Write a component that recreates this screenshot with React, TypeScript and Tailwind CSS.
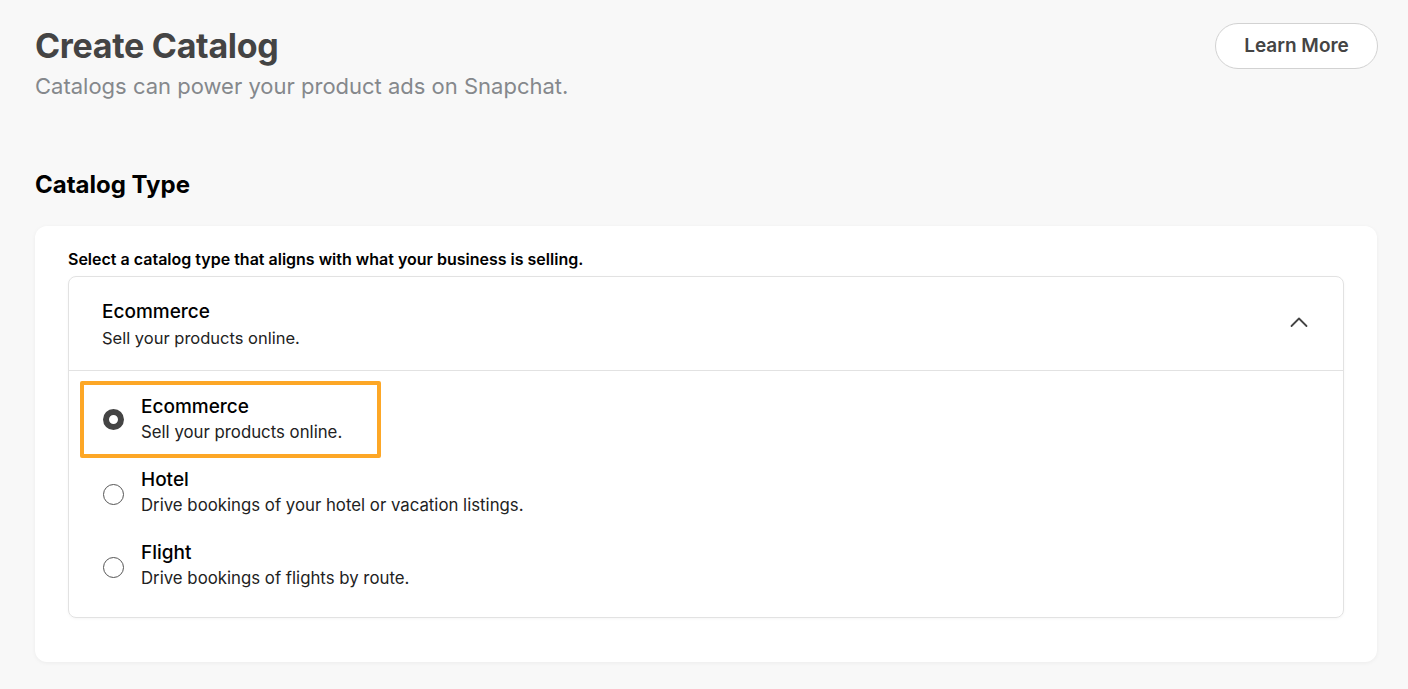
import React from 'react';

const options = [
  { title: 'Ecommerce', desc: 'Sell your products online.', selected: true },
  { title: 'Hotel', desc: 'Drive bookings of your hotel or vacation listings.', selected: false },
  { title: 'Flight', desc: 'Drive bookings of flights by route.', selected: false },
];

const Radio: React.FC<{ checked: boolean }> = ({ checked }) =>
  checked ? (
    <span className="block shrink-0 w-[21px] h-[21px] rounded-full border-[6px] border-[#444444] bg-white" />
  ) : (
    <span className="block shrink-0 w-[21px] h-[21px] rounded-full border border-[#555555] bg-white" />
  );

export default function App() {
  return (
    <div className="min-h-[689px] bg-[#f8f8f8] pl-[35px] pr-[31px] pt-[26px] pb-[27px] font-['Inter','Open_Sans',sans-serif]">
      {/* Header */}
      <div className="flex items-start justify-between">
        <div>
          <h1 className="text-[34px] leading-[40px] font-bold text-[#444444] tracking-[-0.3px]">Create Catalog</h1>
          <p className="mt-[6px] text-[22px] leading-[28px] text-[#85888c]">Catalogs can power your product ads on Snapchat.</p>
        </div>
        <button className="mt-[-3px] mr-[-1px] h-[46px] w-[163px] rounded-full border border-[#d2d2d2] bg-white text-[19px] font-semibold text-[#444444]">
          Learn More
        </button>
      </div>

      <h2 className="mt-[70px] text-[24px] leading-[30px] font-bold text-black">Catalog Type</h2>

      {/* Card */}
      <div className="mt-[26px] rounded-[12px] bg-white shadow-[0_1px_4px_rgba(0,0,0,0.05)] px-[33px] pt-[23px] pb-[44px]">
        <p className="text-[16px] leading-[20px] font-semibold text-black">
          Select a catalog type that aligns with what your business is selling.
        </p>
        <div className="mt-[7px] rounded-[8px] border border-[#e2e2e2] shadow-[0_1px_3px_rgba(0,0,0,0.04)]">
          <div className="flex items-center justify-between pl-[33px] pr-[35px] h-[94px] border-b border-[#e2e2e2]">
            <div>
              <div className="text-[19px] leading-[26px] font-medium text-black">Ecommerce</div>
              <div className="mt-[2px] text-[16.5px] leading-[22px] text-[#222222]">Sell your products online.</div>
            </div>
            <svg width="18" height="12" viewBox="0 0 18 12" fill="none" className="-mt-[4px] text-[#444444]">
              <polyline points="1.5,10 9,2.5 16.5,10" stroke="currentColor" strokeWidth="1.8" strokeLinecap="round" strokeLinejoin="round" />
            </svg>
          </div>
          <div className="pt-[10px] pb-[13px] px-[11px]">
            {options.map((o) => (
              <div
                key={o.title}
                className={
                  o.selected
                    ? 'flex w-[301px] items-center h-[77px] rounded-[2px] border-[4px] border-[#fda726] pl-[19px]'
                    : 'flex w-[301px] items-center h-[73px] pl-[23px]'
                }
              >
                <Radio checked={o.selected} />
                <div className={o.selected ? 'ml-[17px] -mt-[3px]' : 'ml-[17px] -mt-[6px]'}>
                  <div className="text-[19px] leading-[26px] font-medium text-black whitespace-nowrap">{o.title}</div>
                  <div className="mt-[1px] text-[16.8px] leading-[22px] text-[#222222] whitespace-nowrap">{o.desc}</div>
                </div>
              </div>
            ))}
          </div>
        </div>
      </div>
    </div>
  );
}
